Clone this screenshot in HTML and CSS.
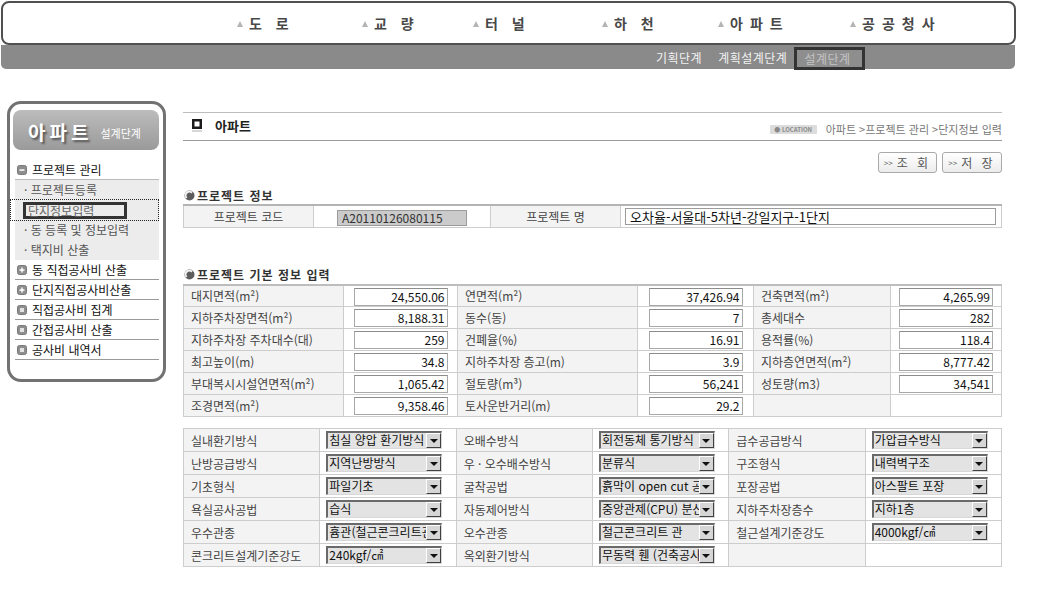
FILE: index.html
```html
<!DOCTYPE html>
<html lang="ko">
<head>
<meta charset="utf-8">
<title>아파트 - 단지정보 입력</title>
<link rel="stylesheet" href="styles.css">
</head>
<body>
<header class="top">
  <nav class="gnb">
    <a class="gi"><span class="tri"></span><span class="w2">도 로</span></a>
    <a class="gi"><span class="tri"></span><span class="w2">교 량</span></a>
    <a class="gi"><span class="tri"></span><span class="w2">터 널</span></a>
    <a class="gi"><span class="tri"></span><span class="w2">하 천</span></a>
    <a class="gi"><span class="tri"></span><span>아파트</span></a>
    <a class="gi"><span class="tri"></span><span>공공청사</span></a>
  </nav>
  <div class="sub">
    <a class="si s1">기획단계</a>
    <a class="si s2">계획설계단계</a>
    <a class="si on">설계단계</a>
  </div>
</header>

<div class="wrap">
  <aside class="side">
    <div class="side-h"><b>아파트</b><span>설계단계</span></div>
    <ul class="menu">
      <li class="m first"><svg class="mi" width="10" height="10" viewBox="0 0 10 10"><rect x="0.5" y="0.5" width="9" height="9" rx="2" fill="#8e8e8e" stroke="#7a7a7a"/><rect x="2.5" y="4.3" width="5" height="1.5" fill="#fff"/></svg>프로젝트 관리</li>
      <li class="subbox">
        <div class="s">· 프로젝트등록</div>
        <div class="s cur"><span class="curbox">단지정보입력</span></div>
        <div class="s">· 동 등록 및 정보입력</div>
        <div class="s">· 택지비 산출</div>
      </li>
      <li class="m"><svg class="mi" width="10" height="10" viewBox="0 0 10 10"><rect x="0.5" y="0.5" width="9" height="9" rx="2" fill="#8e8e8e" stroke="#7a7a7a"/><rect x="2.5" y="4.3" width="5" height="1.5" fill="#fff"/><rect x="4.25" y="2.5" width="1.5" height="5" fill="#fff"/></svg>동 직접공사비 산출</li>
      <li class="m"><svg class="mi" width="10" height="10" viewBox="0 0 10 10"><rect x="0.5" y="0.5" width="9" height="9" rx="2" fill="#8e8e8e" stroke="#7a7a7a"/><rect x="2.5" y="4.3" width="5" height="1.5" fill="#fff"/><rect x="4.25" y="2.5" width="1.5" height="5" fill="#fff"/></svg>단지직접공사비산출</li>
      <li class="m"><svg class="mi" width="10" height="10" viewBox="0 0 10 10"><rect x="0.5" y="0.5" width="9" height="9" rx="2" fill="#8e8e8e" stroke="#7a7a7a"/><rect x="3" y="3" width="4" height="4" fill="#e2e2e2"/></svg>직접공사비 집계</li>
      <li class="m"><svg class="mi" width="10" height="10" viewBox="0 0 10 10"><rect x="0.5" y="0.5" width="9" height="9" rx="2" fill="#8e8e8e" stroke="#7a7a7a"/><rect x="3" y="3" width="4" height="4" fill="#e2e2e2"/></svg>간접공사비 산출</li>
      <li class="m"><svg class="mi" width="10" height="10" viewBox="0 0 10 10"><rect x="0.5" y="0.5" width="9" height="9" rx="2" fill="#8e8e8e" stroke="#7a7a7a"/><rect x="3" y="3" width="4" height="4" fill="#e2e2e2"/></svg>공사비 내역서</li>
    </ul>
  </aside>

  <main class="main">
    <div class="title">
      <h1 class="ttl"><svg width="10" height="13" viewBox="0 0 10 13"><rect x="0" y="0" width="10" height="10" fill="#1c1c1c"/><rect x="2.5" y="2.5" width="5" height="5" fill="#fff"/><rect x="0" y="11.5" width="10" height="1" fill="#b0b0b0"/></svg>아파트</h1>
      <div class="loc"><span class="badge">● LOCATION</span>아파트 &gt;프로젝트 관리 &gt;단지정보 입력</div>
    </div>

    <div class="btns">
      <a class="btn"><i>&gt;&gt;</i>조 회</a>
      <a class="btn"><i>&gt;&gt;</i>저 장</a>
    </div>

    <h2 class="sec-h first-h"><svg width="11" height="11" viewBox="0 0 11 11"><circle cx="5.5" cy="5.5" r="5" fill="#5c5c5c"/><path d="M2 8.6 A4.2 4.2 0 0 1 8.6 2 L7.4 3.4 A2.8 2.8 0 0 0 3.4 7.4 Z" fill="#f4f4f4"/></svg>프로젝트 정보</h2>
    <table class="tbl t1">
      <colgroup><col class="c130"><col class="c177"><col class="c130"><col></colgroup>
      <tr>
        <td class="lb ctr">프로젝트 코드</td>
        <td class="ctr"><span class="code">A20110126080115</span></td>
        <td class="lb ctr">프로젝트 명</td>
        <td class="nmcell"><span class="name">오차율-서울대-5차년-강일지구-1단지</span></td>
      </tr>
    </table>

    <h2 class="sec-h second-h"><svg width="11" height="11" viewBox="0 0 11 11"><circle cx="5.5" cy="5.5" r="5" fill="#5c5c5c"/><path d="M2 8.6 A4.2 4.2 0 0 1 8.6 2 L7.4 3.4 A2.8 2.8 0 0 0 3.4 7.4 Z" fill="#f4f4f4"/></svg>프로젝트 기본 정보 입력</h2>
    <table class="tbl t2">
      <colgroup><col class="c160"><col class="c114"><col class="c180"><col class="c116"><col class="c137"><col></colgroup>
      <tr><td class="lb">대지면적(m²)</td><td class="vc"><span class="num">24,550.06</span></td><td class="lb">연면적(m²)</td><td class="vc"><span class="num">37,426.94</span></td><td class="lb">건축면적(m²)</td><td class="vc"><span class="num">4,265.99</span></td></tr>
      <tr><td class="lb">지하주차장면적(m²)</td><td class="vc"><span class="num">8,188.31</span></td><td class="lb">동수(동)</td><td class="vc"><span class="num">7</span></td><td class="lb">총세대수</td><td class="vc"><span class="num">282</span></td></tr>
      <tr><td class="lb">지하주차장 주차대수(대)</td><td class="vc"><span class="num">259</span></td><td class="lb">건폐율(%)</td><td class="vc"><span class="num">16.91</span></td><td class="lb">용적률(%)</td><td class="vc"><span class="num">118.4</span></td></tr>
      <tr><td class="lb">최고높이(m)</td><td class="vc"><span class="num">34.8</span></td><td class="lb">지하주차장 층고(m)</td><td class="vc"><span class="num">3.9</span></td><td class="lb">지하층연면적(m²)</td><td class="vc"><span class="num">8,777.42</span></td></tr>
      <tr><td class="lb">부대복시시설연면적(m²)</td><td class="vc"><span class="num">1,065.42</span></td><td class="lb">절토량(m³)</td><td class="vc"><span class="num">56,241</span></td><td class="lb">성토량(m3)</td><td class="vc"><span class="num">34,541</span></td></tr>
      <tr><td class="lb">조경면적(m²)</td><td class="vc"><span class="num">9,358.46</span></td><td class="lb">토사운반거리(m)</td><td class="vc"><span class="num">29.2</span></td><td class="lb"></td><td></td></tr>
    </table>

    <table class="tbl t3">
      <tr><td class="lb">실내환기방식</td><td class="sc"><span class="sel"><span class="st">침실 양압 환기방식</span><span class="sb"></span></span></td><td class="lb">오배수방식</td><td class="sc"><span class="sel"><span class="st">회전동체 통기방식</span><span class="sb"></span></span></td><td class="lb">급수공급방식</td><td class="sc"><span class="sel"><span class="st">가압급수방식</span><span class="sb"></span></span></td></tr>
      <tr><td class="lb">난방공급방식</td><td class="sc"><span class="sel"><span class="st">지역난방방식</span><span class="sb"></span></span></td><td class="lb">우 · 오수배수방식</td><td class="sc"><span class="sel"><span class="st">분류식</span><span class="sb"></span></span></td><td class="lb">구조형식</td><td class="sc"><span class="sel"><span class="st">내력벽구조</span><span class="sb"></span></span></td></tr>
      <tr><td class="lb">기초형식</td><td class="sc"><span class="sel"><span class="st">파일기초</span><span class="sb"></span></span></td><td class="lb">굴착공법</td><td class="sc"><span class="sel"><span class="st">흙막이 open cut 공법</span><span class="sb"></span></span></td><td class="lb">포장공법</td><td class="sc"><span class="sel"><span class="st">아스팔트 포장</span><span class="sb"></span></span></td></tr>
      <tr><td class="lb">욕실공사공법</td><td class="sc"><span class="sel"><span class="st">습식</span><span class="sb"></span></span></td><td class="lb">자동제어방식</td><td class="sc"><span class="sel"><span class="st">중앙관제(CPU) 분산제어</span><span class="sb"></span></span></td><td class="lb">지하주차장층수</td><td class="sc"><span class="sel"><span class="st">지하1층</span><span class="sb"></span></span></td></tr>
      <tr><td class="lb">우수관종</td><td class="sc"><span class="sel"><span class="st">흄관(철근콘크리트관)</span><span class="sb"></span></span></td><td class="lb">오수관종</td><td class="sc"><span class="sel"><span class="st">철근콘크리트 관</span><span class="sb"></span></span></td><td class="lb">철근설계기준강도</td><td class="sc"><span class="sel"><span class="st">4000kgf/㎠</span><span class="sb"></span></span></td></tr>
      <tr><td class="lb">콘크리트설계기준강도</td><td class="sc"><span class="sel"><span class="st">240kgf/㎠</span><span class="sb"></span></span></td><td class="lb">옥외환기방식</td><td class="sc"><span class="sel"><span class="st">무동력 휀 (건축공사)</span><span class="sb"></span></span></td><td class="lb"></td><td></td></tr>
    </table>
  </main>
</div>
</body>
</html>
```

FILE: styles.css
```css
* { box-sizing: border-box; }
body {
  margin: 0;
  font-family: "Noto Sans CJK KR", "Noto Sans", sans-serif;
  font-size: 12px;
  color: #333;
  background: #fff;
}
a { text-decoration: none; cursor: pointer; }
ul { list-style: none; margin: 0; padding: 0; }
h1, h2 { margin: 0; }

/* ---------- top navigation ---------- */
.top { width: 1015px; margin-left: 1px; padding-top: 1px; }
.gnb {
  height: 44px;
  border: 2px solid #505050;
  border-radius: 8px;
  background: #fff;
  display: grid;
  grid-template-columns: 125px 111px 129px 116px 132px auto;
  align-items: center;
  padding-left: 234px;
}
.gi {
  display: flex;
  align-items: center;
  color: #484848;
  font-weight: 700;
  font-size: 14px;
  line-height: 16px;
  letter-spacing: 7px;
}
.gi .w2 { word-spacing: -4px; }
.tri {
  width: 0; height: 0;
  border-left: 3.5px solid transparent;
  border-right: 3.5px solid transparent;
  border-bottom: 6px solid #b4b4b4;
  margin: 2px 6px 0 0;
}
.sub {
  height: 24px;
  margin-right: 1px;
  background: #8a8a8a;
  border-radius: 0 0 5px 5px;
  display: flex;
  align-items: flex-start;
  padding: 2px 0 0 655px;
}
.si { color: #f2f2f2; font-size: 12px; line-height: 21px; letter-spacing: 0.5px; }
.s1 { margin-right: 16px; }
.s2 { margin-right: 7px; }
.si.on {
  width: 71px;
  height: 23px;
  border: 3px solid #333;
  padding-left: 7px;
  line-height: 17px;
  color: #c4c4c4;
  background: #8e8e8e;
}

/* ---------- layout ---------- */
.wrap { display: flex; align-items: flex-start; }

/* ---------- side menu ---------- */
.side {
  width: 159px;
  height: 281px;
  margin: 32px 0 0 7px;
  border: 3px solid #727272;
  border-radius: 14px;
  padding: 6px 4px 0 3px;
}
.side-h {
  height: 40px;
  border-radius: 8px;
  background: linear-gradient(#bcbcbc, #9a9a9a);
  display: flex;
  align-items: center;
  padding: 2px 0 0 15px;
}
.side-h b {
  color: #fff;
  font-size: 19px;
  letter-spacing: 4px;
  text-shadow: 2px 2px 2px #555;
  margin-right: 8px;
}
.side-h span { color: #fff; font-size: 11px; margin-top: 3px; }
.menu { margin: 10px 0 0 2px; }
.m {
  height: 20px;
  display: flex;
  align-items: center;
  gap: 5px;
  padding-left: 2px;
  color: #111;
  font-size: 12px;
  border-bottom: 1px solid #9a9a9a;
}
.m.first { border-bottom-color: #bbb; }
.subbox { background: #ececec; }
.s {
  height: 20px;
  line-height: 20px;
  padding-left: 9px;
  color: #555;
  font-size: 12px;
}
.s.cur {
  outline: 1px dotted #222;
  margin: 0 1px 0 -4px;
  padding-left: 12px;
  display: flex;
  align-items: center;
}
.curbox {
  width: 104px;
  height: 17px;
  line-height: 11px;
  border: 3px solid #333;
  padding-left: 2px;
  color: #666;
}

/* ---------- main ---------- */
.main { width: 819px; margin: 43px 0 0 17px; }
.title {
  height: 29px;
  border-top: 1px solid #bdbdbd;
  border-bottom: 1px solid #9a9a9a;
  display: flex;
  align-items: center;
  justify-content: space-between;
}
.ttl {
  display: flex;
  align-items: center;
  gap: 13px;
  padding-left: 9px;
  font-size: 13px;
  font-weight: 700;
  color: #222;
  margin-bottom: 3px;
}
.loc { color: #777; font-size: 11px; margin-top: 5px; display: flex; align-items: center; }
.badge {
  display: inline-block;
  width: 47px;
  height: 9px;
  line-height: 9px;
  background: #dcdcdc;
  color: #8a8a8a;
  font-size: 6px;
  font-weight: 700;
  text-align: center;
  margin-right: 9px;
  border-radius: 1px;
}

.btns { display: flex; justify-content: flex-end; gap: 5px; margin-top: 11px; }
.btn {
  height: 21px;
  width: 59px;
  border: 1px solid #a9a9a9;
  border-radius: 3px;
  background: linear-gradient(#ffffff, #ececec);
  color: #555;
  font-size: 12px;
  letter-spacing: 3px;
  display: flex;
  align-items: center;
  justify-content: center;
  line-height: 19px;
}
.btn:last-child { width: 60px; }
.btn i { font-style: normal; font-size: 8px; letter-spacing: 0; margin-right: 4px; }

.sec-h {
  display: flex;
  align-items: center;
  gap: 2px;
  height: 14px;
  font-size: 12px;
  font-weight: 700;
  color: #333;
  letter-spacing: 1px;
  margin-bottom: 2px;
  padding-left: 1px;
}
.first-h { margin-top: 15px; }
.second-h { margin-top: 40px; }

/* ---------- tables ---------- */
.tbl { width: 819px; border-collapse: collapse; table-layout: fixed; }
.tbl td {
  border: 1px solid #cdcdcd;
  padding: 0;
  font-size: 12px;
  color: #444;
  white-space: nowrap;
  overflow: hidden;
}
.tbl .lb { background: #f3f3f3; padding-left: 7px; }
.tbl .ctr { text-align: center; padding-left: 0; }
.t1 { border-top: 2px solid #b4b4b4; }
.t1 tr { height: 22px; }
.t2 { border-top: 2px solid #bdbdbd; }
.t2 tr { height: 22px; }
.t3 { margin-top: 11px; }
.t3 tr { height: 23px; }
.c130 { width: 130px; }
.c177 { width: 177px; }
.c160 { width: 160px; }
.c114 { width: 114px; }
.c180 { width: 180px; }
.c116 { width: 116px; }
.c137 { width: 137px; }

.code {
  display: inline-block;
  width: 130px;
  height: 16px;
  line-height: 14px;
  background: #cbcbcb;
  border: 1px solid #9c9c9c;
  color: #333;
  text-align: left;
  padding-left: 4px;
  vertical-align: middle;
}
.nmcell { padding-left: 4px !important; }
.name {
  display: block;
  width: 371px;
  height: 17px;
  line-height: 15px;
  border: 1px solid #9c9c9c;
  background: #fff;
  color: #111;
  font-size: 13px;
  padding-left: 4px;
}
.vc { text-align: center; }
.num {
  display: inline-block;
  width: 94px;
  height: 18px;
  line-height: 16px;
  border: 1px solid #a8a8a8;
  border-top-color: #8c8c8c;
  text-align: right;
  padding-right: 2px;
  color: #111;
  vertical-align: middle;
}
.sc { padding-left: 6px !important; }
.sel {
  display: flex;
  width: 116px;
  height: 18px;
  border-top: 2px solid #6a6a6a;
  border-left: 2px solid #6a6a6a;
  border-right: 1px solid #d8d8d8;
  border-bottom: 1px solid #d8d8d8;
  background: #e3e3e3;
  vertical-align: middle;
}
.st {
  flex: 1;
  overflow: hidden;
  white-space: nowrap;
  color: #111;
  font-size: 12px;
  line-height: 14px;
  padding-left: 1px;
}
.sb {
  width: 15px;
  height: 15px;
  background: #d6d6d6;
  border-top: 1px solid #fff;
  border-left: 1px solid #fff;
  border-right: 1px solid #404040;
  border-bottom: 1px solid #404040;
  display: flex;
  align-items: center;
  justify-content: center;
}
.sb::after {
  content: "";
  width: 0; height: 0;
  border-left: 4px solid transparent;
  border-right: 4px solid transparent;
  border-top: 4px solid #111;
}
```
